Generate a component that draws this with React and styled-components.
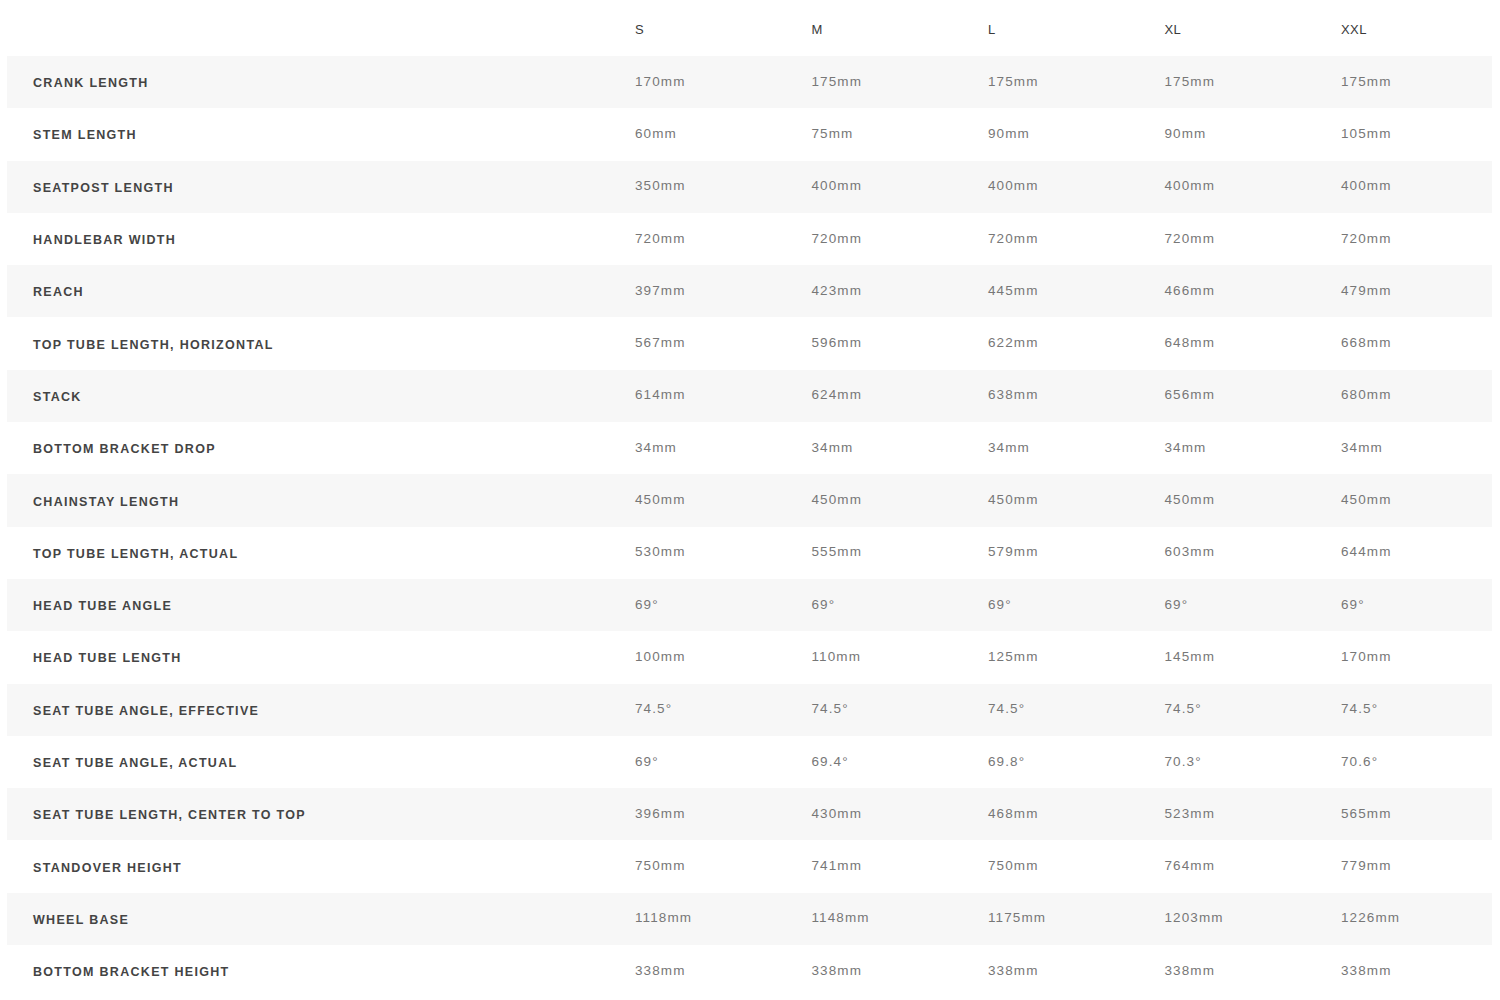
import React from 'react'
import styled, { createGlobalStyle } from 'styled-components'

const GlobalStyle = createGlobalStyle`
  body {
    margin: 0;
    background: #fff;
    font-family: "Liberation Sans", Arial, sans-serif;
  }
`

const sizes = ['S', 'M', 'L', 'XL', 'XXL']

const rows = [
  ['Crank length', '170mm', '175mm', '175mm', '175mm', '175mm'],
  ['Stem length', '60mm', '75mm', '90mm', '90mm', '105mm'],
  ['Seatpost length', '350mm', '400mm', '400mm', '400mm', '400mm'],
  ['Handlebar width', '720mm', '720mm', '720mm', '720mm', '720mm'],
  ['Reach', '397mm', '423mm', '445mm', '466mm', '479mm'],
  ['Top tube length, horizontal', '567mm', '596mm', '622mm', '648mm', '668mm'],
  ['Stack', '614mm', '624mm', '638mm', '656mm', '680mm'],
  ['Bottom bracket drop', '34mm', '34mm', '34mm', '34mm', '34mm'],
  ['Chainstay length', '450mm', '450mm', '450mm', '450mm', '450mm'],
  ['Top tube length, actual', '530mm', '555mm', '579mm', '603mm', '644mm'],
  ['Head tube angle', '69°', '69°', '69°', '69°', '69°'],
  ['Head tube length', '100mm', '110mm', '125mm', '145mm', '170mm'],
  ['Seat tube angle, effective', '74.5°', '74.5°', '74.5°', '74.5°', '74.5°'],
  ['Seat tube angle, actual', '69°', '69.4°', '69.8°', '70.3°', '70.6°'],
  ['Seat tube length, center to top', '396mm', '430mm', '468mm', '523mm', '565mm'],
  ['Standover height', '750mm', '741mm', '750mm', '764mm', '779mm'],
  ['Wheel base', '1118mm', '1148mm', '1175mm', '1203mm', '1226mm'],
  ['Bottom bracket height', '338mm', '338mm', '338mm', '338mm', '338mm'],
]

const Table = styled.div`
  width: 1485px;
  margin-left: 7px;
`

const Row = styled.div`
  display: grid;
  grid-template-columns: 628px 176.5px 176.5px 176.5px 176.5px 1fr;
  align-items: center;
  height: ${p => (p.$head ? '56px' : '52.3px')};
  background: ${p => (p.$shade ? '#f7f7f7' : '#fff')};
`

const HeadCell = styled.div`
  font-size: 13px;
  color: #3a3a3a;
  letter-spacing: 0.4px;
  padding-top: 2px;
`

const Label = styled.div`
  padding-left: 26px;
  padding-top: 2px;
  font-size: 12.5px;
  font-weight: 700;
  text-transform: uppercase;
  letter-spacing: 1.3px;
  color: #444;
`

const Value = styled.div`
  font-size: 13.5px;
  letter-spacing: 1.1px;
  color: #777;
  padding-bottom: 2px;
`

export default function App() {
  return (
    <>
      <GlobalStyle />
      <Table>
        <Row $head>
          <div />
          {sizes.map(s => (
            <HeadCell key={s}>{s}</HeadCell>
          ))}
        </Row>
        {rows.map(([label, ...vals], i) => (
          <Row key={label} $shade={i % 2 === 0}>
            <Label>{label}</Label>
            {vals.map((v, j) => (
              <Value key={j}>{v}</Value>
            ))}
          </Row>
        ))}
      </Table>
    </>
  )
}
